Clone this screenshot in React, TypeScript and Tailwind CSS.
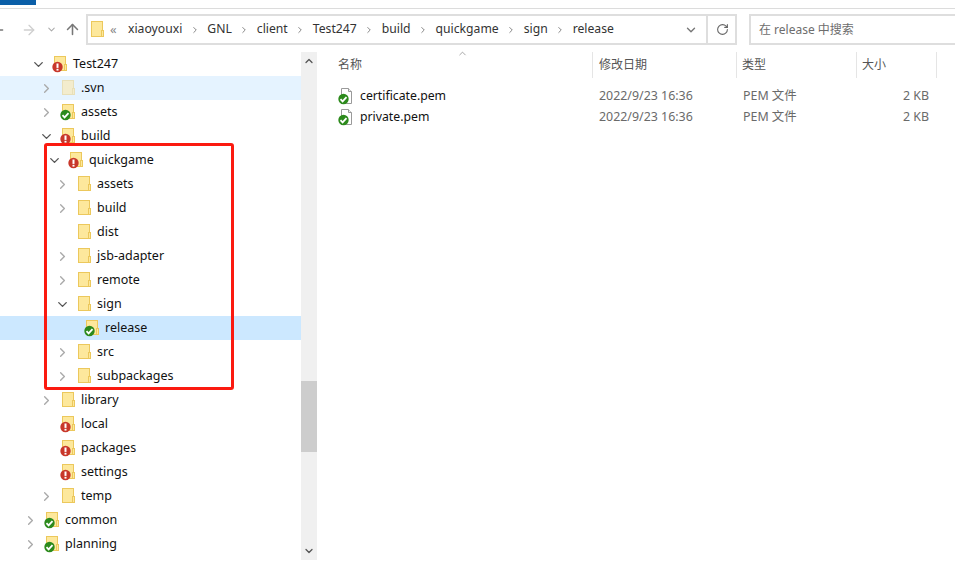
import React from 'react';
import { ArrowLeft, ArrowRight, ArrowUp, ChevronDown, ChevronRight, ChevronUp, RotateCw } from 'lucide-react';

type Badge = 'ok' | 'err' | 'none';

interface Row {
  name: string;
  depth: number;
  arrow?: 'open' | 'closed';
  badge?: Badge;
  faded?: boolean;
  selected?: boolean;
  hovered?: boolean;
}

const rows: Row[] = [
  { name: 'Test247', depth: 1, arrow: 'open', badge: 'err' },
  { name: '.svn', depth: 2, arrow: 'closed', faded: true, hovered: true },
  { name: 'assets', depth: 2, arrow: 'closed', badge: 'ok' },
  { name: 'build', depth: 2, arrow: 'open', badge: 'err' },
  { name: 'quickgame', depth: 3, arrow: 'open', badge: 'err' },
  { name: 'assets', depth: 4, arrow: 'closed' },
  { name: 'build', depth: 4, arrow: 'closed' },
  { name: 'dist', depth: 4 },
  { name: 'jsb-adapter', depth: 4, arrow: 'closed' },
  { name: 'remote', depth: 4, arrow: 'closed' },
  { name: 'sign', depth: 4, arrow: 'open' },
  { name: 'release', depth: 5, badge: 'ok', selected: true },
  { name: 'src', depth: 4, arrow: 'closed' },
  { name: 'subpackages', depth: 4, arrow: 'closed' },
  { name: 'library', depth: 2, arrow: 'closed' },
  { name: 'local', depth: 2, badge: 'err' },
  { name: 'packages', depth: 2, badge: 'err' },
  { name: 'settings', depth: 2, badge: 'err' },
  { name: 'temp', depth: 2, arrow: 'closed' },
  { name: 'common', depth: 0, arrow: 'closed', badge: 'ok' },
  { name: 'planning', depth: 0, arrow: 'closed', badge: 'ok' },
];

const crumbs = ['xiaoyouxi', 'GNL', 'client', 'Test247', 'build', 'quickgame', 'sign', 'release'];

const files = [
  { name: 'certificate.pem', date: '2022/9/23 16:36', type: 'PEM 文件', size: '2 KB' },
  { name: 'private.pem', date: '2022/9/23 16:36', type: 'PEM 文件', size: '2 KB' },
];

function StatusBadge({ kind, cx, cy }: { kind: Badge; cx: number; cy: number }) {
  if (kind === 'err') {
    return (
      <g>
        <circle cx={cx} cy={cy} r={5.2} fill="#c8372a" />
        <rect x={cx - 1} y={cy - 3.5} width={2} height={4.4} fill="#fff" />
        <rect x={cx - 1} y={cy + 1.8} width={2} height={1.8} fill="#fff" />
      </g>
    );
  }
  if (kind === 'ok') {
    return (
      <g>
        <circle cx={cx} cy={cy} r={5.2} fill="#2c8a1c" />
        <path d={`M${cx - 3} ${cy + 0.2}l2.1 2.2 3.9-4.3`} fill="none" stroke="#fff" strokeWidth={1.8} />
      </g>
    );
  }
  return null;
}

function FolderIcon({ badge = 'none', faded }: { badge?: Badge; faded?: boolean }) {
  const fill = faded ? '#f3eccd' : '#fde89c';
  const line = faded ? '#e8dfb8' : '#ecc85c';
  return (
    <svg width="16" height="17" viewBox="0 0 16 17" className="shrink-0">
      <rect x="2.5" y="0.5" width="11" height="14" fill={fill} stroke={line} />
      <rect x="12.5" y="8.5" width="2" height="6" fill={fill} stroke={line} />
      <StatusBadge kind={badge} cx={5.5} cy={11} />
    </svg>
  );
}

function FileIcon() {
  return (
    <svg width="16" height="17" viewBox="0 0 16 17" className="shrink-0">
      <path d="M3.5.5h7l3 3v12h-10z" fill="#fff" stroke="#9a9a9a" />
      <path d="M10.5.5v3h3" fill="#eee" stroke="#9a9a9a" />
      <StatusBadge kind="ok" cx={5.5} cy={11} />
    </svg>
  );
}

function TreeRow({ row }: { row: Row }) {
  const indent = ['pl-[27px]', 'pl-[35px]', 'pl-[43px]', 'pl-[51px]', 'pl-[59px]', 'pl-[67px]'][row.depth];
  const bg = row.selected ? 'bg-[#cce8ff]' : row.hovered ? 'bg-[#e5f3ff]' : '';
  return (
    <div className={`flex h-6 items-center ${indent} ${bg}`}>
      <div className="flex w-[17px] shrink-0 items-center">
        {row.arrow === 'open' && <ChevronDown size={15} strokeWidth={2.2} className="ml-[-4px] text-[#555]" />}
        {row.arrow === 'closed' && <ChevronRight size={15} strokeWidth={2.2} className="ml-[-4px] text-[#aaa]" />}
      </div>
      <FolderIcon badge={row.badge} faded={row.faded} />
      <span className="ml-[5px] text-[12.5px] text-[#111]">{row.name}</span>
    </div>
  );
}

export default function App() {
  return (
    <div className="relative h-[564px] w-[955px] overflow-hidden bg-white font-['Noto_Sans','Noto_Sans_CJK_SC',sans-serif]">
      {/* title strip */}
      <div className="h-[8px] border-b border-[#dcdcdc] box-content">
        <div className="h-[5px] w-9 bg-[#0b5fa8]" />
      </div>

      {/* toolbar */}
      <div className="flex h-[43px] items-start pt-[5px]">
        <div className="flex h-[31px] w-[86px] shrink-0 items-center">
          <ArrowLeft size={16} strokeWidth={2} className="ml-[-10px] text-[#777]" />
          <ArrowRight size={16} strokeWidth={2} className="ml-[15px] text-[#cfcfcf]" />
          <ChevronDown size={11} strokeWidth={2.2} className="ml-[9px] text-[#aaa]" />
          <ArrowUp size={17} strokeWidth={2.2} className="ml-[7px] text-[#777]" />
        </div>
        <div className="flex h-[31px] w-[651px] shrink-0 items-center border-2 border-[#dedede] text-[12.2px] text-[#333]">
          <svg width="16" height="17" viewBox="0 0 16 17" className="ml-[1px] shrink-0">
            <rect x="2.5" y="0.5" width="11" height="15" fill="#fde89c" stroke="#ecc85c" />
            <rect x="12.5" y="9.5" width="2" height="6" fill="#fde89c" stroke="#ecc85c" />
          </svg>
          <span className="ml-[5px] w-[18px] text-[13px] leading-none text-[#888]">«</span>
          {crumbs.map((c, i) => (
            <React.Fragment key={c}>
              {i > 0 && (
                <span className="flex w-[25px] justify-center">
                  <ChevronRight size={10} strokeWidth={2.4} className="text-[#888]" />
                </span>
              )}
              <span>{c}</span>
            </React.Fragment>
          ))}
          <div className="ml-auto flex items-center">
            <ChevronDown size={14} strokeWidth={2.4} className="mr-[8px] text-[#777]" />
            <div className="flex h-[27px] w-[29px] items-center justify-center border-l-2 border-[#dedede]">
              <RotateCw size={13} strokeWidth={2} className="ml-[2px] text-[#666]" />
            </div>
          </div>
        </div>
        <div className="ml-[12px] flex h-[31px] flex-1 items-center border-2 border-r-0 border-[#dedede] pl-2 text-[12px] text-[#6d6d6d]">
          在 release 中搜索
        </div>
      </div>

      <div className="flex">
        {/* nav tree */}
        <div className="w-[301px] shrink-0">
          {rows.map((r, i) => (
            <TreeRow key={i} row={r} />
          ))}
        </div>

        {/* scrollbar */}
        <div className="flex h-[508px] w-[16px] shrink-0 flex-col items-center bg-[#f0f0f0]">
          <ChevronUp size={12} strokeWidth={2.6} className="mt-[3px] text-[#555]" />
          <div className="mt-[314px] h-[71px] w-full bg-[#cdcdcd]" />
          <ChevronDown size={12} strokeWidth={2.6} className="mt-[93px] text-[#555]" />
        </div>

        {/* file list */}
        <div className="flex-1 pl-px">
          <div className="relative grid h-[26px] grid-cols-[275px_144px_120px_80px] text-[12px] text-[#555]">
            <div className="border-r border-[#e5e5e5] pl-[20px] pt-[4px]">名称</div>
            <div className="border-r border-[#e5e5e5] pl-[6px] pt-[4px]">修改日期</div>
            <div className="border-r border-[#e5e5e5] pl-[5px] pt-[4px]">类型</div>
            <div className="border-r border-[#e5e5e5] pl-[5px] pt-[4px]">大小</div>
            <ChevronUp size={11} strokeWidth={1.6} className="absolute left-[139px] top-[-4px] text-[#888]" />
          </div>
          <div className="mt-[8px]">
            {files.map((f) => (
              <div key={f.name} className="grid h-[21px] grid-cols-[275px_144px_120px_80px] items-center text-[12.4px] text-[#6a6a6a]">
                <div className="flex items-center pl-[20px] text-[12.25px] text-[#111]">
                  <FileIcon />
                  <span className="ml-[6px]">{f.name}</span>
                </div>
                <div className="pl-[6px]">{f.date}</div>
                <div className="pl-[6px]">{f.type}</div>
                <div className="pr-[8px] text-right">{f.size}</div>
              </div>
            ))}
          </div>
        </div>
      </div>

      {/* red annotation box */}
      <div className="absolute left-[44px] top-[143px] h-[247px] w-[190px] rounded-[3px] border-[3px] border-[#fb1a10]" />
    </div>
  );
}
